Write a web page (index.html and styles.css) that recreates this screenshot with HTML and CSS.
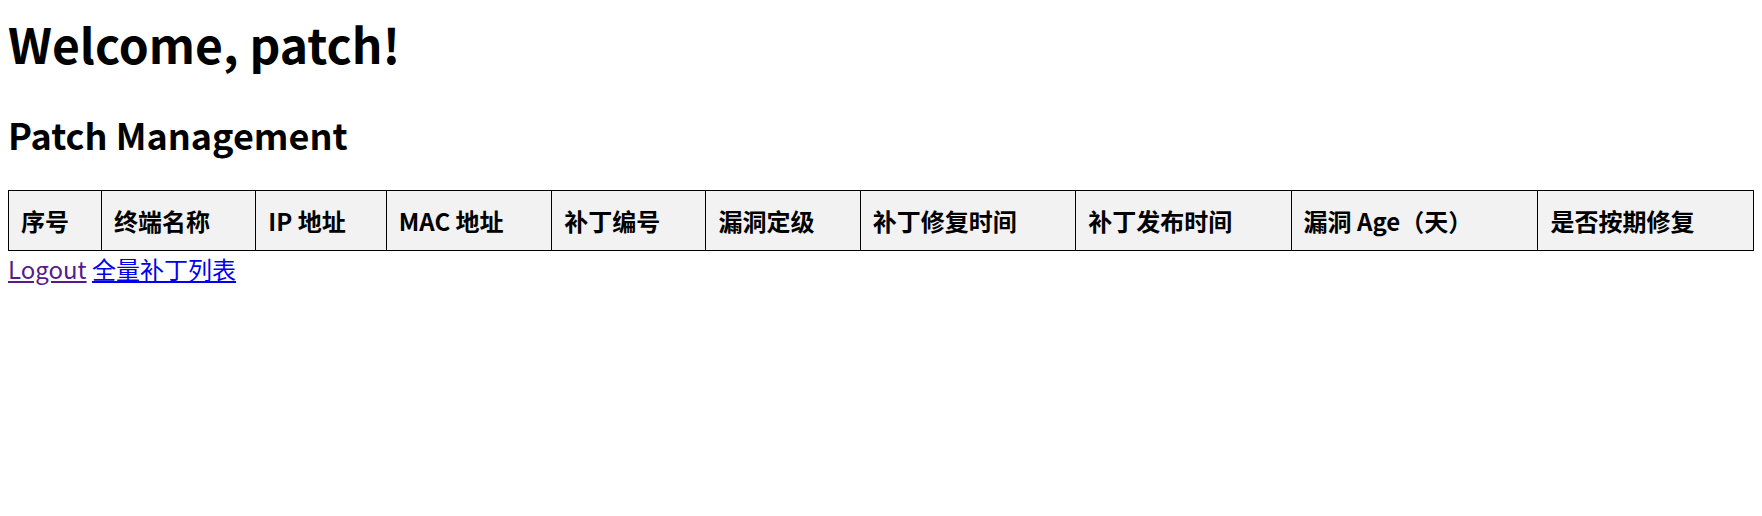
FILE: index.html
```html
<!DOCTYPE html>
<html lang="zh-CN">
<head>
<meta charset="utf-8">
<title>Patch Management</title>
<link rel="stylesheet" href="styles.css">
</head>
<body>
<h1 class="welcome">Welcome, patch!</h1>
<h2 class="section-title">Patch Management</h2>
<table class="patch-table">
  <thead>
    <tr>
      <th>序号</th>
      <th>终端名称</th>
      <th>IP 地址</th>
      <th>MAC 地址</th>
      <th>补丁编号</th>
      <th>漏洞定级</th>
      <th>补丁修复时间</th>
      <th>补丁发布时间</th>
      <th>漏洞 Age（天）</th>
      <th>是否按期修复</th>
    </tr>
  </thead>
  <tbody></tbody>
</table>
<a class="link visited" href="#logout">Logout</a> <a class="link" href="#all">全量补丁列表</a>
</body>
</html>
```

FILE: styles.css
```css
body {
  margin: 8px;
  font-family: "Noto Sans CJK SC", "Noto Sans", sans-serif;
  font-size: 24px;
  color: #000;
  background: #fff;
}

.welcome {
  font-size: 48px;
  font-weight: bold;
  margin: 0 0 30px;
}

.section-title {
  font-size: 36px;
  font-weight: bold;
  margin: 30px 0;
}

.patch-table {
  width: 100%;
  border-collapse: collapse;
  border: 1px solid #000;
}

.patch-table th {
  border: 1px solid #000;
  background: #f2f2f2;
  padding: 12px;
  text-align: left;
  font-weight: bold;
}

.link {
  color: #0000ee;
  text-decoration: underline;
}

.link.visited {
  color: #551a8b;
}
```
